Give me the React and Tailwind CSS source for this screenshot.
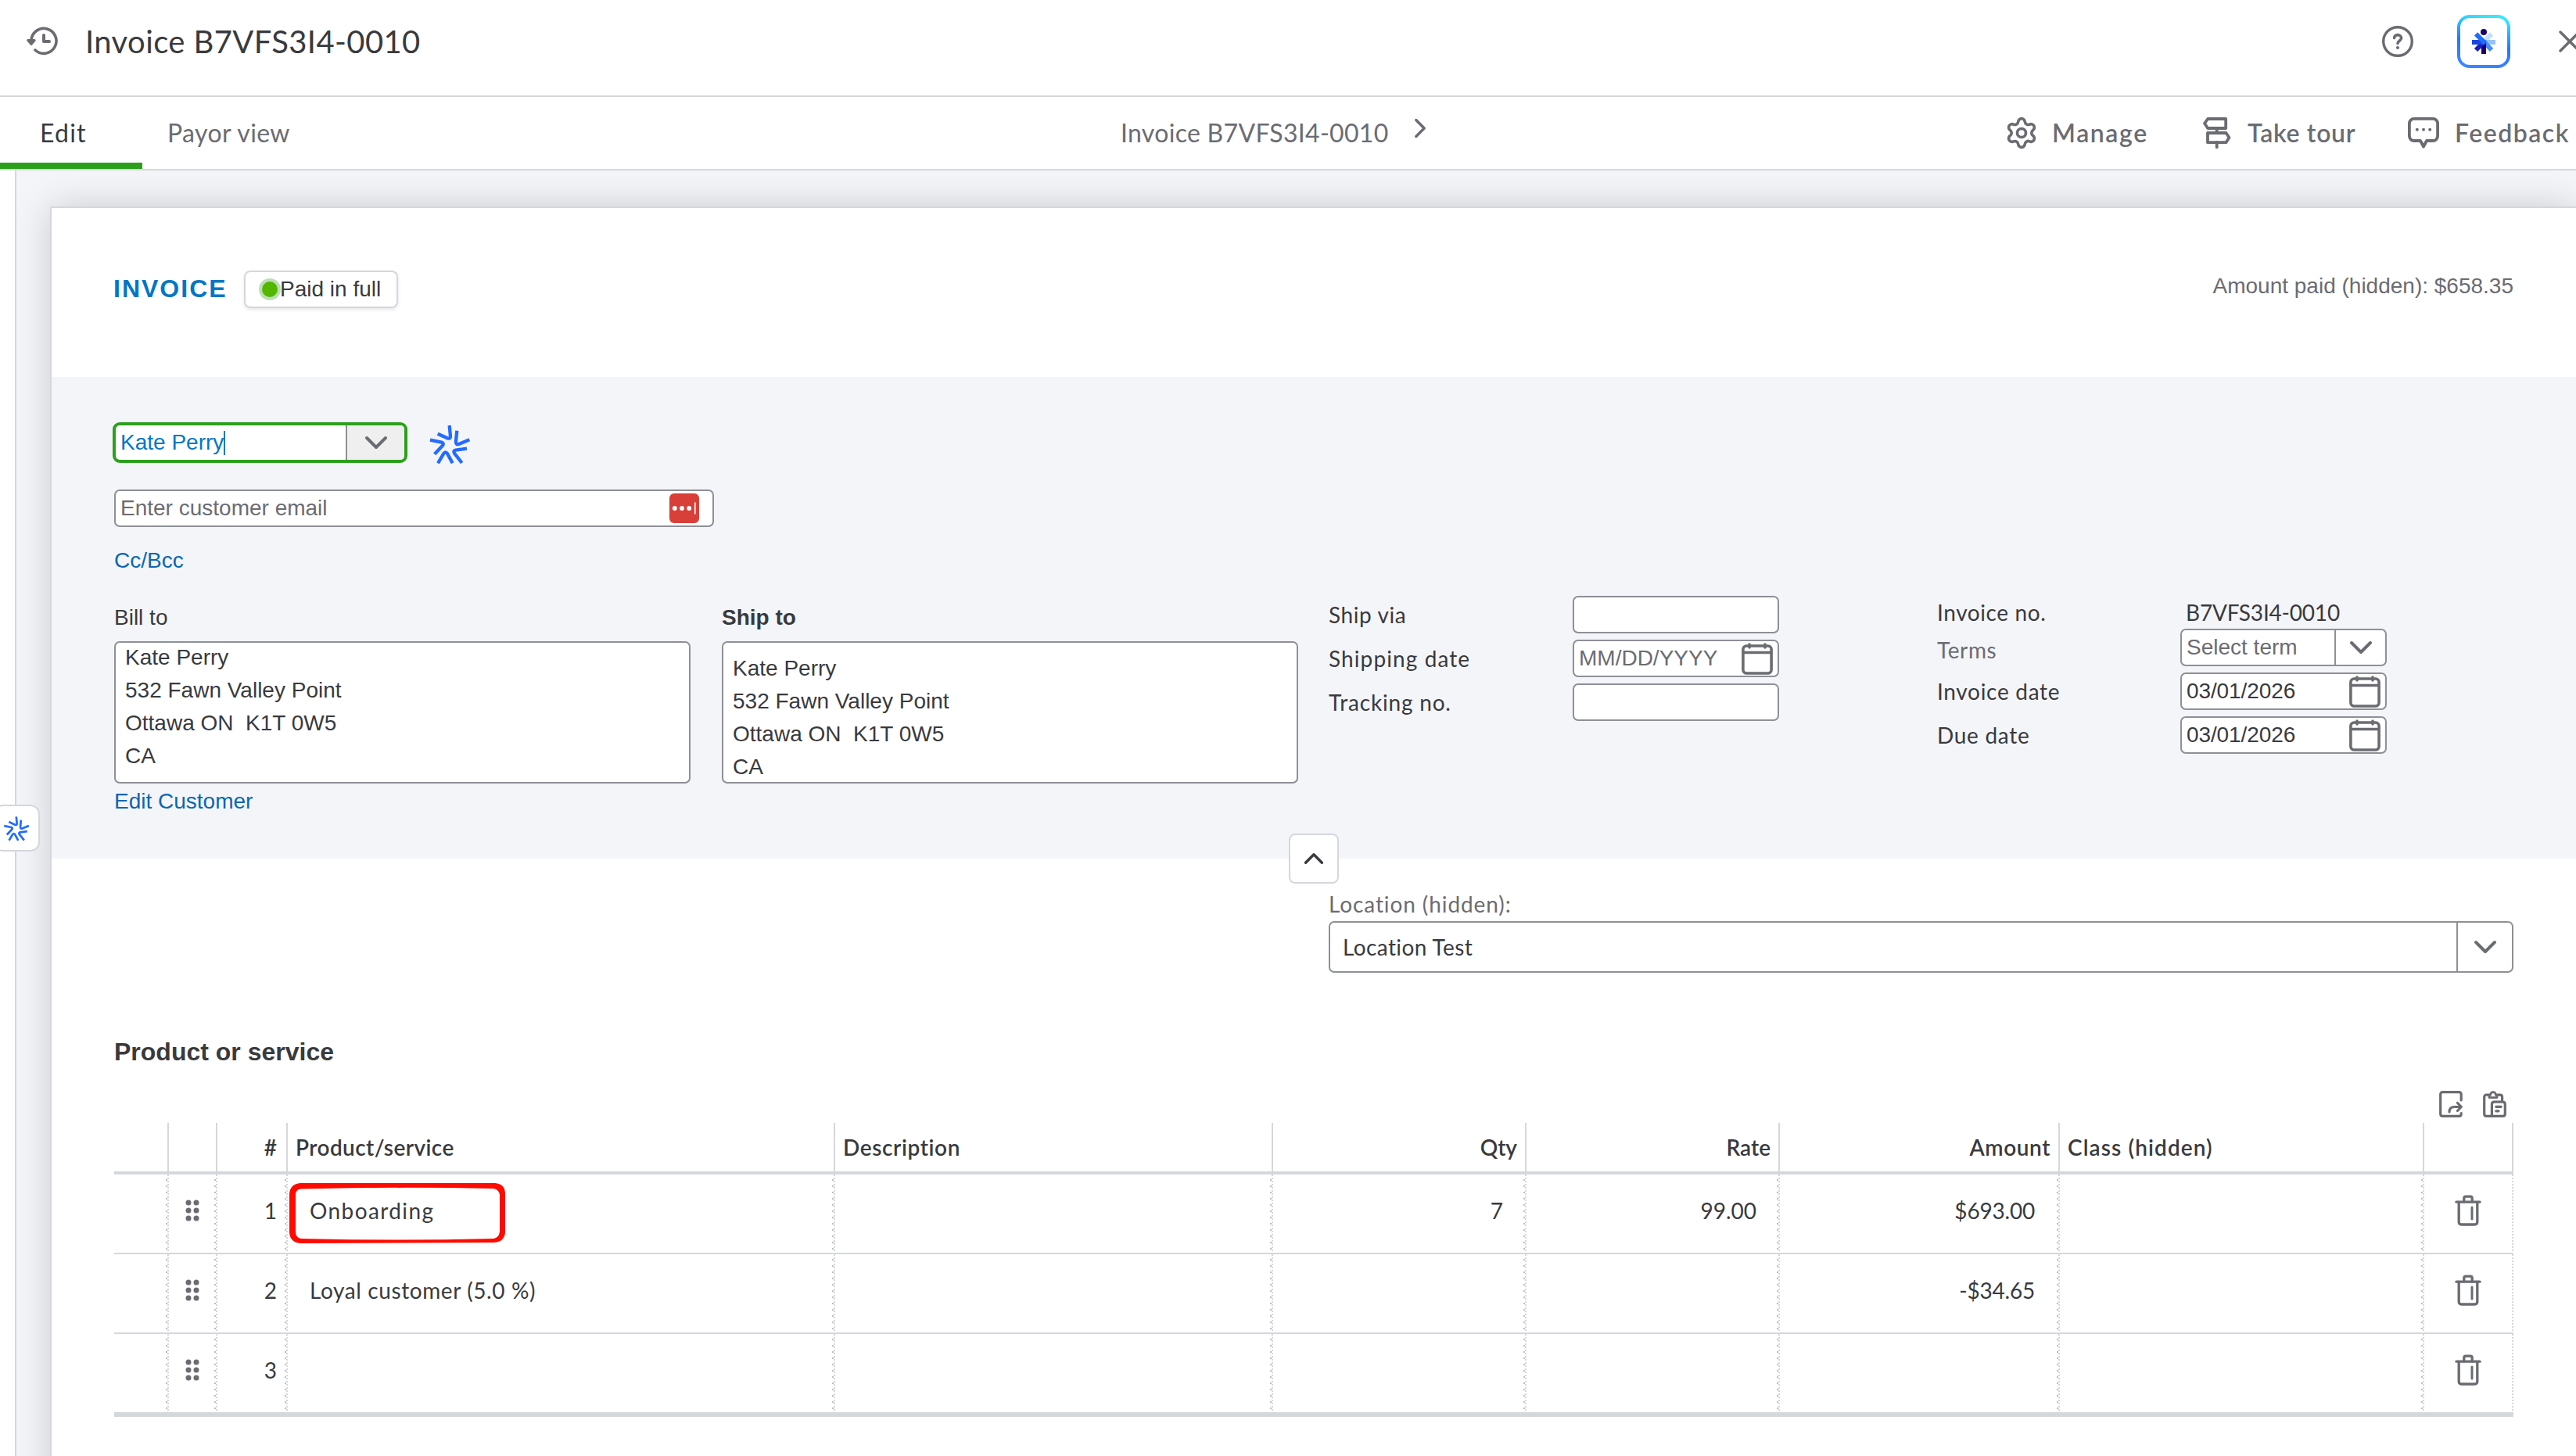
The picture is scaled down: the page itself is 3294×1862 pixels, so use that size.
import React from "react";
import { Settings } from "lucide-react";

const address = ["Kate Perry", "532 Fawn Valley Point", "Ottawa ON\u00a0 K1T 0W5", "CA"];

const lines = [
  { product: "Onboarding", qty: "7", rate: "99.00", amount: "$693.00", marked: true },
  { product: "Loyal customer (5.0 %)", qty: "", rate: "", amount: "-$34.65" },
  { product: "", qty: "", rate: "", amount: "" },
];

const columns = "grid grid-cols-[70px_62px_90px_700px_560px_324px_324px_358px_466px_114px]";

const Chevron = ({ className }) => (
  <svg className={className} viewBox="0 0 30 18" fill="none" stroke="currentColor" strokeWidth="4" strokeLinecap="round" strokeLinejoin="round">
    <path d="M3 3L15 15L27 3" />
  </svg>
);

const HistoryIcon = () => (
  <svg className="w-10 h-10" viewBox="0 0 40 40" fill="none" stroke="#6b6c72" strokeWidth="3.6" strokeLinecap="round" strokeLinejoin="round">
    <path d="M6 19A16 16 0 1 1 11 31" />
    <path d="M22 12V20H29" strokeWidth="4" />
    <path d="M1.8 18.5H10.2L6 23.5Z" fill="#6b6c72" strokeWidth="3" />
  </svg>
);

const HelpIcon = () => (
  <svg className="w-10 h-10 shrink-0" viewBox="0 0 40 40" fill="none" stroke="#6b6c72" strokeWidth="3.4" strokeLinecap="round">
    <circle cx="20" cy="20" r="18.3" />
    <path d="M15.6 15.6C15.6 13.2 17.5 11.6 20 11.6S24.6 13.4 24.6 15.8C24.6 19 20 19.4 20 22.4" strokeWidth="3.6" />
    <circle cx="20" cy="28" r="2.1" fill="#6b6c72" stroke="none" />
  </svg>
);

const AssistIcon = () => (
  <svg className="w-[68px] h-[68px]" viewBox="0 0 204 204" fill="none">
    <defs>
      <linearGradient id="assist" x1="0.6" y1="0" x2="0.4" y2="1">
        <stop offset="0" stopColor="#39e6fa" />
        <stop offset="0.55" stopColor="#2277ff" />
        <stop offset="1" stopColor="#3b86ff" />
      </linearGradient>
    </defs>
    <rect x="6" y="6" width="192" height="192" rx="42" stroke="url(#assist)" strokeWidth="12" />
    <g strokeWidth="18">
      <path d="M102 104L132 73" stroke="#c4dff9" />
      <path d="M102 105H147" stroke="#97c2f7" />
      <path d="M102 102L132 135" stroke="#4a8bf2" />
      <path d="M102 105V150" stroke="#1b0068" />
      <path d="M104 103L72 135" stroke="#1b1fbb" />
      <path d="M102 105H57" stroke="#1c45e0" />
      <path d="M108 109L72 73" stroke="#1f6fff" />
    </g>
    <circle cx="102" cy="66" r="12" fill="#1b0068" />
  </svg>
);

const CloseIcon = () => (
  <svg className="w-7 h-7 shrink-0" viewBox="0 0 28 28" fill="none" stroke="#6b6c72" strokeWidth="3.4" strokeLinecap="round">
    <path d="M2 2L26 26M26 2L2 26" />
  </svg>
);

const TourIcon = () => (
  <svg className="w-10 h-10" viewBox="0 0 40 40" fill="none" stroke="#6b6c72" strokeWidth="3.8" strokeLinejoin="round">
    <path d="M8.2 2H31.2V14H8.2L4 7.8Z" />
    <path d="M8 20H31.5L35.5 26L31.5 32.2H8Z" />
    <path d="M19.7 14V20M19.7 32V38.2" strokeLinecap="round" />
  </svg>
);

const FeedbackIcon = () => (
  <svg className="w-10 h-10" viewBox="0 0 40 40" fill="none" stroke="#6b6c72" strokeWidth="3.8" strokeLinejoin="round">
    <path d="M8 1.9H32A6 6 0 0 1 38.1 8V24A6 6 0 0 1 32 30H24L20 37.5L16 30H8A6 6 0 0 1 1.9 24V8A6 6 0 0 1 8 1.9Z" />
    <g fill="#6b6c72" stroke="none">
      <circle cx="11.8" cy="15.8" r="2" />
      <circle cx="20" cy="15.8" r="2" />
      <circle cx="28.2" cy="15.8" r="2" />
    </g>
  </svg>
);

const Burst = ({ className }) => (
  <svg className={className} viewBox="54 34 162 156" fill="none" stroke="#236cff" strokeWidth="13" strokeLinejoin="round">
    <path d="M89 72L126 89Q138 93 138 82L134 40" />
    <path d="M163 60L159 101Q158 116 170 112L211 95" />
    <path d="M201 129L158 135Q147 138 153 147L182 184" />
    <path d="M146 185L126 148Q119 138 112 148L90 185" />
    <path d="M60 96L104 105Q114 108 108 117L77 150" />
  </svg>
);

const CalendarIcon = () => (
  <svg className="w-10 h-[41px] shrink-0" viewBox="0 0 40 41" fill="none" stroke="#6b6c72" strokeWidth="3.6" strokeLinecap="round">
    <rect x="1.9" y="4" width="36.2" height="35" rx="4.5" />
    <path d="M2 12.5H38" strokeLinecap="butt" />
    <path d="M10 2V6M30 2V6" />
  </svg>
);

const PasswordIcon = () => (
  <svg className="w-[38px] h-[38px]" viewBox="0 0 38 38">
    <rect width="38" height="38" rx="6" fill="#d93f39" />
    <g fill="#fff">
      <circle cx="6.8" cy="19" r="2.9" />
      <circle cx="16" cy="19" r="2.9" />
      <circle cx="25.2" cy="19" r="2.9" />
      <rect x="32" y="11.5" width="1.6" height="15" />
    </g>
  </svg>
);

const ExportIcon = () => (
  <svg className="w-[30px] h-[34px]" viewBox="0 0 30 34" fill="none" stroke="#6b6c72" strokeWidth="3.2" strokeLinecap="round" strokeLinejoin="round">
    <path d="M28.2 12V4.6Q28.2 1.7 25.4 1.7H4.6Q1.7 1.7 1.7 4.6V29.4Q1.7 32.3 4.6 32.3H25.4Q28.2 32.3 28.2 29.4V28.5" />
    <path d="M13 27Q13 20.5 20 20.5H28M23.5 15.5L28.3 20.5L23.5 25.5" />
  </svg>
);

const PasteIcon = () => (
  <svg className="w-[30px] h-[34px]" viewBox="0 0 30 34" fill="none" stroke="#6b6c72" strokeWidth="3.2" strokeLinecap="round" strokeLinejoin="round">
    <path d="M8 5.2H4.6Q1.7 5.2 1.7 8V29.4Q1.7 32.3 4.6 32.3H25.4Q28.3 32.3 28.3 29.4V17.4Q28.3 14.2 25.4 14.2H14.4Q11.4 14.2 11.4 17.4V32M18 5.2H21.6Q24.6 5.2 24.6 8V13.5" />
    <path d="M8 8.6V5.4H9.5Q10 1.7 13 1.7T16.5 5.4H18V8.6Z" strokeWidth="2.8" />
    <path d="M16.8 20.3H23.2M16.8 25.8H20" />
  </svg>
);

const TrashIcon = () => (
  <svg className="w-[34px] h-10" viewBox="0 0 34 40" fill="none" stroke="#6b6c72" strokeWidth="3.3" strokeLinecap="round" strokeLinejoin="round">
    <path d="M2 9.2H32" />
    <path d="M11.8 9V4.5Q11.8 2.2 14 2.2H20Q22.2 2.2 22.2 4.5V9" />
    <path d="M5.2 9.5V34.5Q5.2 38 8.6 38H25.4Q28.8 38 28.8 34.5V9.5" />
    <path d="M22 16V31" strokeWidth="3" />
  </svg>
);

const DragIcon = () => (
  <svg className="w-[18px] h-7" viewBox="0 0 18 28" fill="#6b6c72">
    {[4, 14, 24].map(y => [4, 14].map(x => <circle key={`${x}-${y}`} cx={x} cy={y} r="3.5" />))}
  </svg>
);

const Field = ({ className = "", children }) => (
  <div className={`flex items-center h-12 border-2 border-[#8d9096] rounded-[7px] bg-white overflow-hidden ${className}`}>{children}</div>
);

const Label = ({ className = "", children }) => (
  <div className={`font-[Lato,sans-serif] whitespace-nowrap ${className}`}>{children}</div>
);

const HeadCell = ({ right, children }) => (
  <div className={`flex items-center border-r-2 border-[#d4d7dc] ${right ? "justify-end pr-2.5" : "pl-2.5"}`}>{children}</div>
);

// Cells end in a light dotted rule with a sparser resize handle beside it
const Cell = ({ className = "", last, children }) => (
  <div className="flex">
    <div className={`grow flex items-center pb-[9px] ${className}`}>{children}</div>
    {!last && <div className="w-0.5 bg-[repeating-linear-gradient(to_bottom,transparent_0,transparent_6px,#babec5_6px,#babec5_8px)]" />}
    <div className="w-0.5 bg-[repeating-linear-gradient(to_bottom,#d4d7dc_0,#d4d7dc_2px,transparent_2px,transparent_4px)]" />
  </div>
);

const TopBar = () => (
  <header className="shrink-0 flex items-center h-[124px] pb-4 pl-[34px] border-b-2 border-[#d4d7dc] bg-white">
    <HistoryIcon />
    <h1 className="ml-[35px] text-[40px] leading-[48px] tracking-[0.4px] whitespace-nowrap">Invoice B7VFS3I4-0010</h1>
    <div className="ml-auto w-[248px] flex items-center overflow-hidden">
      <HelpIcon />
      <div className="ml-14 shrink-0"><AssistIcon /></div>
      <div className="ml-[62px] shrink-0"><CloseIcon /></div>
    </div>
  </header>
);

const TabBar = () => (
  <nav className="shrink-0 grid grid-cols-[182px_1251px_1132px_1fr] h-[94px] border-b-2 border-[#d4d7dc] bg-white text-[32px] leading-10 text-[#6b6c72] whitespace-nowrap">
    <div className="flex items-center pt-2 pl-[51px] border-b-8 border-[#2ca01c] text-[#393a3d] tracking-[1.2px]">Edit</div>
    <div className="flex items-center pl-8 tracking-[0.4px]">Payor view</div>
    <div className="flex items-center tracking-[0.3px]">
      Invoice B7VFS3I4-0010
      <Chevron className="w-[26px] h-4 ml-[27px] mb-3 -rotate-90" />
    </div>
    <div className="flex items-center font-semibold">
      <div className="w-[250px] flex items-center gap-[17px]"><Settings size={44} strokeWidth={2} className="-ml-0.5" /><span className="tracking-[1.6px]">Manage</span></div>
      <div className="w-[264px] flex items-center gap-[19px]"><TourIcon /><span className="tracking-[0.7px]">Take tour</span></div>
      <div className="flex items-center gap-5"><FeedbackIcon /><span className="tracking-[1.5px]">Feedback</span></div>
    </div>
  </nav>
);

const Address = ({ title, bold, inset }) => (
  <div className="pt-[33px]">
    <div className={bold ? "leading-10 font-bold" : "leading-10"}>{title}</div>
    <div className={`mt-2.5 h-[182px] pl-3 border-2 border-[#8d9096] rounded-[7px] bg-white overflow-hidden leading-[42px] ${inset ? "pt-3" : "-mr-px"}`}>
      {address.map((line, i) => <div key={line} className={!inset && i === 0 ? "-mt-0.5" : ""}>{line}</div>)}
    </div>
  </div>
);

const CustomerPanel = () => (
  <section className="relative h-[616px] pt-[58px] px-20 bg-[#f4f5f8] font-['Liberation_Sans',sans-serif]">
    <div className="flex items-start h-[52px] -ml-0.5">
      <div className="flex w-[377px] h-[52px] border-4 border-[#2ca01c] rounded-[9px] bg-white overflow-hidden">
        <div className="flex items-center w-[296px] pl-1.5 border-r-2 border-[#8d9096] text-[#0077c5]">
          Kate Perry<span className="w-0.5 h-[31px] bg-[#0077c5]" />
        </div>
        <div className="grow flex items-center justify-center bg-[#efefef] text-[#6b6c72]"><Chevron className="w-[30px] h-[18px]" /></div>
      </div>
      <Burst className="w-[54px] h-[52px] ml-[27px] mt-0.5" />
    </div>
    <Field className="mt-[34px] w-[767px] pl-1.5 pr-[17px] justify-between text-[#6b6c72]">Enter customer email<PasswordIcon /></Field>
    <div className="mt-[23px] leading-10 text-[#0a67b1]">Cc/Bcc</div>
    <div className="grid grid-cols-[777px_776px_777px_1fr]">
      <div className="w-[736px]">
        <Address title="Bill to" />
        <div className="mt-[3px] leading-10 text-[#0a67b1]">Edit Customer</div>
      </div>
      <div className="w-[737px]"><Address title="Ship to" bold inset /></div>
      <div className="pt-[25px] grid grid-cols-[312px_264px] gap-y-2 auto-rows-[48px] items-center content-start">
        <Label className="tracking-[0.6px]">Ship via</Label>
        <Field />
        <Label className="tracking-[1.1px]">Shipping date</Label>
        <Field className="pl-1.5 pr-1.5 justify-between text-[#6b6c72]">MM/DD/YYYY<CalendarIcon /></Field>
        <Label className="tracking-[0.8px]">Tracking no.</Label>
        <Field />
      </div>
      <div className="pt-[25px] pl-px grid grid-cols-[311px_264px] gap-y-2 grid-rows-[34px_48px_48px_48px] items-center content-start">
        <Label className="pt-[7px] tracking-[0.6px]">Invoice no.</Label>
        <Label className="pt-[7px] pl-[7px] tracking-[-0.2px]">B7VFS3I4-0010</Label>
        <Label className="pt-1.5 text-[#6b6c72] tracking-[0.6px]">Terms</Label>
        <Field className="text-[#6b6c72]">
          <div className="w-[197px] h-full pl-1.5 flex items-center border-r-2 border-[#8d9096]">Select term</div>
          <div className="grow flex justify-center"><Chevron className="w-[30px] h-[18px]" /></div>
        </Field>
        <Label className="tracking-[0.7px]">Invoice date</Label>
        <Field className="pl-1.5 pr-1.5 justify-between tracking-[-0.1px]">03/01/2026<CalendarIcon /></Field>
        <Label className="tracking-[0.7px]">Due date</Label>
        <Field className="pl-1.5 pr-1.5 justify-between tracking-[-0.1px]">03/01/2026<CalendarIcon /></Field>
      </div>
    </div>
    <div className="absolute left-1/2 -bottom-8 -translate-x-1/2 w-16 h-16 flex items-center justify-center border-2 border-[#d4d7dc] rounded-lg bg-white">
      <Chevron className="w-[26px] h-4 rotate-180" />
    </div>
  </section>
);

const ItemsTable = () => (
  <div className="w-[3068px]">
    <div className={`${columns} h-[66px] border-b-4 border-[#d4d7dc] font-semibold whitespace-nowrap`}>
      <HeadCell />
      <HeadCell />
      <HeadCell right><span className="mr-0.5">#</span></HeadCell>
      <HeadCell><span className="tracking-[0.4px]">Product/service</span></HeadCell>
      <HeadCell><span className="tracking-[0.6px]">Description</span></HeadCell>
      <HeadCell right>Qty</HeadCell>
      <HeadCell right>Rate</HeadCell>
      <HeadCell right><span className="tracking-[0.6px]">Amount</span></HeadCell>
      <HeadCell><span className="tracking-[1.1px]">Class (hidden)</span></HeadCell>
      <HeadCell />
    </div>
    {lines.map((line, i) => (
      <div key={i} className={`${columns} border-[#d4d7dc] whitespace-nowrap ${i === lines.length - 1 ? "h-[106px] border-b-6" : "h-[102px] border-b-2"}`}>
        <Cell />
        <Cell className="justify-center pl-0.5"><DragIcon /></Cell>
        <Cell className="justify-end pr-2.5">{i + 1}</Cell>
        <div className="relative grid">
          <Cell className="pl-7"><span className={line.marked ? "tracking-[1.4px]" : "tracking-[0.6px]"}>{line.product}</span></Cell>
          {line.marked && (
            <svg className="absolute left-0.5 top-[11px] w-[276px] h-[77px]" viewBox="0 0 276 77" fill="#ff0a00" fillRule="evenodd">
              <path d="M14 0H263Q276 1 276 14V63Q275 75 262 76L14 77Q1 76 0 63V14Q1 1 14 0ZM15 7.5Q8 8 8 15V62Q8 70 15 71Q138 74 261 71Q268 70 269 62V15Q268 8 261 7Q138 4.500 15 7.5Z" />
            </svg>
          )}
        </div>
        <Cell />
        <Cell className="justify-end pr-[26px]">{line.qty}</Cell>
        <Cell className="justify-end pr-[26px]">{line.rate}</Cell>
        <Cell className="justify-end pr-7 tracking-[-0.2px]">{line.amount}</Cell>
        <Cell />
        <Cell last className="justify-center"><TrashIcon /></Cell>
      </div>
    ))}
  </div>
);

const Sheet = () => (
  <main className="grow mt-[46px] ml-[43px] border-2 border-r-0 border-[#d4d7dc] bg-white shadow-[0_0_44px_rgba(0,0,0,0.17)]">
    <div className="flex items-start justify-between h-[216px] pt-20 pl-[79px] pr-20 font-['Liberation_Sans',sans-serif]">
      <div className="flex">
        <div className="w-[167px] pt-0.5 text-[32px] leading-[42px] font-bold tracking-[2px] text-[#0077c5]">INVOICE</div>
        <div className="flex items-center w-[197px] h-12 pl-[17px] border-2 border-[#d4d7dc] rounded-lg shadow-[0_2px_4px_rgba(0,0,0,0.1)]">
          <span className="w-5 h-5 m-1 mr-[3px] rounded-full bg-[#53b700] ring-4 ring-[#bddfb6]" />
          <span className="relative leading-9">Paid in full</span>
        </div>
      </div>
      <div className="leading-10 text-[#6b6c72]">Amount paid (hidden): $658.35</div>
    </div>
    <CustomerPanel />
    <section className="pt-[38px] px-20">
      <div className="ml-[1553px] w-[1515px]">
        <div className="leading-10 text-[#6b6c72] tracking-[0.9px]">Location (hidden):</div>
        <div className="mt-0.5 flex h-[66px] border-2 border-[#8d9096] rounded-[7px]">
          <div className="grow flex items-center pl-4 tracking-[0.4px]">Location Test</div>
          <div className="flex items-center justify-center w-[71px] border-l-2 border-[#8d9096] text-[#6b6c72]"><Chevron className="w-[30px] h-[18px]" /></div>
        </div>
      </div>
      <h2 className="mt-[81px] text-[32px] leading-10 font-bold font-['Liberation_Sans',sans-serif]">Product or service</h2>
      <div className="flex justify-end gap-[26px] mt-[30px] mb-[7px] mr-[9px]"><ExportIcon /><PasteIcon /></div>
      <ItemsTable />
    </section>
  </main>
);

export default function App() {
  return (
    <div className="w-[3294px] h-[1862px] flex flex-col overflow-hidden bg-white font-[Lato,sans-serif] text-[28px] leading-10 text-[#393a3d]">
      <TopBar />
      <TabBar />
      <div className="relative grow min-h-0 flex">
        <div className="w-[21px] shrink-0 border-r-2 border-[#d4d7dc] bg-white" />
        <div className="grow h-[1800px] flex overflow-hidden bg-[#f4f5f8]"><Sheet /></div>
        <div className="absolute -left-2 top-[811px] w-[59px] h-[60px] flex items-center pl-2.5 border-2 border-[#d4d7dc] rounded-[12px] bg-white">
          <Burst className="w-[34px] h-[33px]" />
        </div>
      </div>
    </div>
  );
}
